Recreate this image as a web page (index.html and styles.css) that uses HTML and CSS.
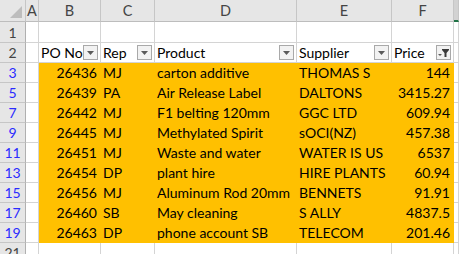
FILE: index.html
```html
<!DOCTYPE html>
<html>
<head>
<meta charset="utf-8">
<link rel="stylesheet" href="styles.css">
</head>
<body>
<div class="sheet">
  <div class="c h corner"><svg width="25" height="21" viewBox="0 0 25 21"><polygon points="10,18 22,18 22,6" fill="#bdbdbd"/></svg></div>
  <div class="c h col">A</div>
  <div class="c h col">B</div>
  <div class="c h col">C</div>
  <div class="c h col">D</div>
  <div class="c h col">E</div>
  <div class="c h col">F</div>
  <div class="c h col sel"></div>

  <div class="c h rn">1</div>
  <div class="c"></div><div class="c"></div><div class="c"></div><div class="c"></div><div class="c"></div><div class="c"></div><div class="c"></div>

  <div class="c h rn">2</div>
  <div class="c"></div>
  <div class="c hd"><span>PO No</span><i class="btn"><svg width="13" height="13" viewBox="0 0 13 13"><polygon points="3,5 10,5 6.5,9" fill="#5a5a5a"/></svg></i></div>
  <div class="c hd"><span>Rep</span><i class="btn"><svg width="13" height="13" viewBox="0 0 13 13"><polygon points="3,5 10,5 6.5,9" fill="#5a5a5a"/></svg></i></div>
  <div class="c hd"><span>Product</span><i class="btn"><svg width="13" height="13" viewBox="0 0 13 13"><polygon points="3,5 10,5 6.5,9" fill="#5a5a5a"/></svg></i></div>
  <div class="c hd"><span>Supplier</span><i class="btn"><svg width="13" height="13" viewBox="0 0 13 13"><polygon points="3,5 10,5 6.5,9" fill="#5a5a5a"/></svg></i></div>
  <div class="c hd"><span>Price</span><i class="btn"><svg width="13" height="13" viewBox="0 0 13 13"><polygon points="1,8 5,8 3,10" fill="#5a5a5a"/><polygon points="5,3 12,3 12,4 9.5,7 9.5,11 7.5,11 7.5,7 5,4" fill="#3a3a3a"/></svg></i></div>
  <div class="c"></div>

  <div class="c h rn f">3</div><div class="c"></div>
  <div class="c o num">26436</div><div class="c o">MJ</div><div class="c o">carton additive</div><div class="c o">THOMAS S</div><div class="c o num">144</div><div class="c"></div>

  <div class="c h rn f">5</div><div class="c"></div>
  <div class="c o num">26439</div><div class="c o">PA</div><div class="c o">Air Release Label</div><div class="c o">DALTONS</div><div class="c o num">3415.27</div><div class="c"></div>

  <div class="c h rn f">7</div><div class="c"></div>
  <div class="c o num">26442</div><div class="c o">MJ</div><div class="c o">F1 belting 120mm</div><div class="c o">GGC LTD</div><div class="c o num">609.94</div><div class="c"></div>

  <div class="c h rn f">9</div><div class="c"></div>
  <div class="c o num">26445</div><div class="c o">MJ</div><div class="c o">Methylated Spirit</div><div class="c o">sOCI(NZ)</div><div class="c o num">457.38</div><div class="c"></div>

  <div class="c h rn f">11</div><div class="c"></div>
  <div class="c o num">26451</div><div class="c o">MJ</div><div class="c o">Waste and water</div><div class="c o">WATER IS US</div><div class="c o num">6537</div><div class="c"></div>

  <div class="c h rn f">13</div><div class="c"></div>
  <div class="c o num">26454</div><div class="c o">DP</div><div class="c o">plant hire</div><div class="c o">HIRE PLANTS</div><div class="c o num">60.94</div><div class="c"></div>

  <div class="c h rn f">15</div><div class="c"></div>
  <div class="c o num">26456</div><div class="c o">MJ</div><div class="c o">Aluminum Rod 20mm</div><div class="c o">BENNETS</div><div class="c o num">91.91</div><div class="c"></div>

  <div class="c h rn f">17</div><div class="c"></div>
  <div class="c o num">26460</div><div class="c o">SB</div><div class="c o">May cleaning</div><div class="c o">S ALLY</div><div class="c o num">4837.5</div><div class="c"></div>

  <div class="c h rn f">19</div><div class="c"></div>
  <div class="c o num">26463</div><div class="c o">DP</div><div class="c o">phone account SB</div><div class="c o">TELECOM</div><div class="c o num">201.46</div><div class="c"></div>

  <div class="c h rn">21</div>
  <div class="c"></div><div class="c"></div><div class="c"></div><div class="c"></div><div class="c"></div><div class="c"></div><div class="c"></div>
</div>
</body>
</html>
```
FILE: styles.css
```css
html, body {
  margin: 0;
  padding: 0;
  background: #ffffff;
  overflow: hidden;
}
.sheet {
  display: grid;
  grid-template-columns: 26px 13px 62px 54px 142px 95px 62px 1fr;
  grid-template-rows: 22px 21px 20px repeat(10, 20px);
  width: 459px;
  font-family: Lato, "Open Sans", sans-serif;
  font-size: 14px;
  color: #000;
}
.c {
  box-sizing: border-box;
  border-right: 1px solid #d4d4d4;
  border-bottom: 1px solid #d4d4d4;
  display: flex;
  align-items: center;
  padding: 0 2px 0 2px;
  white-space: nowrap;
  overflow: hidden;
  line-height: 19px;
}
.h {
  background: #e6e6e6;
  border-right-color: #c6c6c6;
  border-bottom-color: #bdbdbd;
  color: #444;
  justify-content: center;
  padding: 0;
}
.corner {
  padding: 0;
  align-items: stretch;
}
.col {
  font-size: 14.5px;
}
.sel {
  background: #d2d2d2;
  border-bottom: 2px solid #217346;
}
.rn {
  border-right-color: #b0b0b0;
  border-bottom-color: #c6c6c6;
}
.rn.f {
  color: #2b2bff;
}
.o {
  background: #ffc000;
  border-color: #ffc000;
}
.num {
  justify-content: flex-end;
  padding-right: 3px;
}
.hd {
  justify-content: space-between;
  padding-right: 2px;
}
.btn {
  box-sizing: border-box;
  width: 15px;
  height: 15px;
  border: 1px solid #a9a9a9;
  background: #f2f2f2;
  display: flex;
  align-items: center;
  justify-content: center;
  flex: none;
}
.btn svg {
  display: block;
}
```
